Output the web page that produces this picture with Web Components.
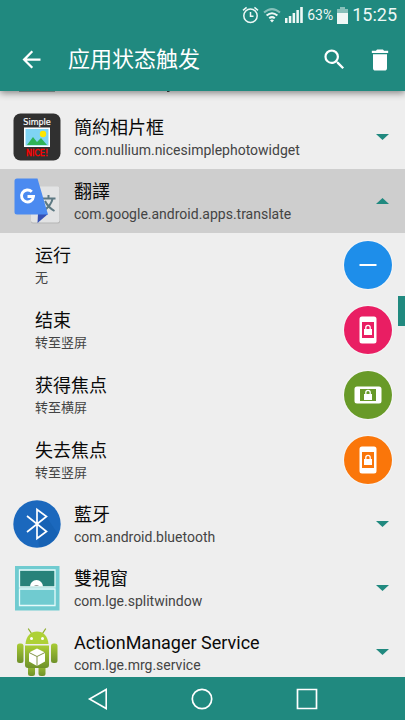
<!DOCTYPE html>
<html lang="zh-CN">
<head>
<meta charset="utf-8">
<meta name="viewport" content="width=device-width, initial-scale=1">
<title>应用状态触发</title>
<style>
  html, body { margin: 0; height: 100%; }
  body { font-family: Roboto, "Noto Sans CJK SC", sans-serif; background: #eee; color: #111; --teal: #20897f; overflow: hidden; }
</style>
</head>
<body>
<trigger-screen></trigger-screen>

<script>
const define = (name, html) => {
  const t = document.createElement('template');
  t.innerHTML = html;
  customElements.define(name, class extends HTMLElement {
    constructor() {
      super();
      this.attachShadow({ mode: 'open' }).append(t.content.cloneNode(true));
    }
    connectedCallback() {
      const label = this.getAttribute('label');
      const b = this.shadowRoot.querySelector('button');
      if (label && b) b.setAttribute('aria-label', label);
      if (b && name === 'app-row') b.setAttribute('aria-expanded', this.hasAttribute('open'));
    }
  });
};

define('status-bar', `
<style>
  :host { display: flex; height: 30px; align-items: center; justify-content: flex-end; gap: 4px; padding-right: 8px; box-sizing: border-box; color: #eef8f6; }
  svg { display: block; }
  .pct { font-size: 14px; line-height: 20px; }
  .time { font-size: 18px; line-height: 24px; }
</style>
<svg width="17" height="18" viewBox="0 0 17 18" fill="none" stroke="currentColor" stroke-width="1.5"><circle cx="8.5" cy="9.7" r="6.7"/><path d="M8.5 6v4.2h3M1 4.3 4.6 1.3M16 4.3 12.4 1.3"/></svg>
<svg width="18" height="16" viewBox="0 0 18 16" fill="none" stroke="currentColor" stroke-width="2"><path opacity=".5" d="M1 5.6Q9-1.4 17 5.6"/><path d="M3.6 8.6Q9 3.800 14.400 8.600M6.200 11.300Q9 9 11.800 11.300"/><path d="M7 13.200Q9 11.800 11 13.200L9 15.600Z" fill="currentColor" stroke="none"/></svg>
<svg width="18" height="16" viewBox="0 0 18 16" fill="currentColor"><path d="M0 11h2.500v5H0zM3.800 9h2.500v7H3.800zM7.600 6h2.500v10H7.600zM11.400 3h2.500v13h-2.500zM15.200 0h2.600v16h-2.600z"/></svg>
<span class="pct">63%</span>
<svg width="11" height="17" viewBox="0 0 11 17" fill="currentColor"><path opacity=".5" d="M3 0h5v2h3v4H0V2h3z"/><path d="M0 6h11v11H0z"/></svg>
<span class="time">15:25</span>
`);

define('icon-button', `
<style>
  :host { display: block; color: #fff; }
  button { display: grid; place-items: center; width: 46px; height: 46px; padding: 0; border: 0; background: none; color: inherit; cursor: pointer; }
</style>
<button type="button"><slot></slot></button>
`);

define('app-header', `
<style>
  :host { display: block; position: relative; z-index: 2; background: var(--teal); box-shadow: 0 2px 7px rgba(0,0,0,.45); }
  .bar { display: flex; height: 61px; align-items: center; padding: 0 2px 2px 8px; box-sizing: border-box; }
  h1 { flex: 1; margin: 0 0 0 14px; font-size: 22px; line-height: 32px; font-weight: 400; color: #fff; }
  svg { display: block; }
</style>
<status-bar></status-bar>
<div class="bar">
  <icon-button label="返回"><svg width="27" height="27" viewBox="0 0 24 24" fill="currentColor"><path d="M20 11H7.830l5.590-5.590L12 4l-8 8 8 8 1.410-1.410L7.830 13H20v-2z"/></svg></icon-button>
  <h1>应用状态触发</h1>
  <icon-button label="搜索"><svg width="27" height="27" viewBox="0 0 24 24" fill="currentColor"><path d="M15.500 14h-.790l-.280-.270A6.471 6.471 0 0 0 16 9.500 6.500 6.500 0 1 0 9.500 16c1.610 0 3.090-.590 4.230-1.570l.270.280v.790l5 4.990L20.490 19l-4.990-5zm-6 0C7.010 14 5 11.990 5 9.500S7.010 5 9.500 5 14 7.010 14 9.500 11.990 14 9.500 14z"/></svg></icon-button>
  <icon-button label="删除"><svg width="28" height="28" viewBox="0 0 24 24" fill="currentColor"><path d="M6 19c0 1.100.900 2 2 2h8c1.100 0 2-.900 2-2V7H6v12zM19 4h-3.500l-1-1h-5l-1 1H5v2h14V4z"/></svg></icon-button>
</div>
`);

define('app-row', `
<style>
  :host { display: block; }
  button { display: flex; width: 100%; height: 64px; padding: 0 16px 0 13px; border: 0; background: none; font: inherit; color: inherit; text-align: left; align-items: center; cursor: pointer; }
  :host([open]) button { background: #cecece; }
  .icon { flex: none; width: 48px; height: 48px; }
  .text { flex: 1; min-width: 0; padding: 2px 0 0 13px; display: flex; flex-direction: column; }
  .name { font-size: 18px; line-height: 24px; color: #0a0a0a; }
  .pkg { font-size: 14px; line-height: 20px; color: #444; }
  .arrow { width: 13px; height: 6px; background: var(--teal); clip-path: polygon(0 0, 100% 0, 50% 100%); }
  :host([open]) .arrow { clip-path: polygon(50% 0, 100% 100%, 0 100%); }
</style>
<button type="button">
  <span class="icon"><slot name="icon"></slot></span>
  <span class="text"><span class="name"><slot></slot></span><span class="pkg"><slot name="pkg"></slot></span></span>
  <span class="arrow"></span>
</button>
`);

define('trigger-row', `
<style>
  :host { display: flex; height: 64px; align-items: center; padding: 0 13px 0 35px; }
  .text { flex: 1; padding-top: 2px; }
  .name { font-size: 18px; line-height: 24px; color: #0a0a0a; }
  .action { font-size: 13px; line-height: 20px; color: #444; }
  button { display: grid; place-items: center; width: 48px; height: 48px; padding: 0; border: 0; border-radius: 50%; background: var(--disc); color: #fff; cursor: pointer; box-shadow: 0 0 1px 1px rgba(255,255,255,.5); }
</style>
<div class="text"><div class="name"><slot></slot></div><div class="action"><slot name="action"></slot></div></div>
<button type="button"><slot name="icon"></slot></button>
`);

define('nav-bar', `
<style>
  :host { display: grid; grid-template-columns: repeat(3, 1fr); height: 43px; padding: 0 46px; background: var(--teal); position: relative; z-index: 2; }
  button { display: grid; place-items: center; padding: 0; border: 0; background: none; color: #fff; cursor: pointer; }
  svg { display: block; }
</style>
<button type="button" aria-label="后退"><svg width="22" height="22" viewBox="0 0 22 22" fill="none" stroke="currentColor" stroke-width="1.600"><path d="M19.200 1.500v19L2.500 11z"/></svg></button>
<button type="button" aria-label="主页"><svg width="22" height="22" viewBox="0 0 22 22" fill="none" stroke="currentColor" stroke-width="1.700"><circle cx="11" cy="11" r="9.700"/></svg></button>
<button type="button" aria-label="最近"><svg width="22" height="22" viewBox="0 0 22 22" fill="none" stroke="currentColor" stroke-width="1.700"><path d="M1.500 1.500h19v19h-19z"/></svg></button>
`);

const lock = `<path d="M10 13h8v6h-8z"/><path d="M11.800 13.500v-2a2.200 2.200 0 0 1 4.400 0v2" fill="none" stroke="currentColor" stroke-width="1.300"/>`;
const phone = `<svg slot="icon" width="28" height="28" viewBox="0 0 28 28" fill="currentColor"><path fill-rule="evenodd" d="M8 .5h12a2.500 2.500 0 0 1 2.500 2.500v22a2.500 2.500 0 0 1-2.500 2.500H8A2.500 2.500 0 0 1 5.500 25V3A2.500 2.500 0 0 1 8 .5zM8 6v16h12V6z"/>${lock}</svg>`;
const phoneWide = `<svg slot="icon" width="28" height="28" viewBox="0 0 28 28" fill="currentColor"><path fill-rule="evenodd" d="M3 5.500h22A2.500 2.500 0 0 1 27.500 8v12a2.500 2.500 0 0 1-2.500 2.500H3A2.500 2.500 0 0 1 .5 20V8A2.500 2.500 0 0 1 3 5.500zM6 8v12h16V8z"/>${lock}</svg>`;

define('trigger-screen', `
<style>
  :host { display: flex; flex-direction: column; height: 100vh; }
  main { flex: 1; min-height: 0; overflow: hidden; position: relative; }
  .tail { display: block; height: 14px; }
  .triggers { display: flex; flex-direction: column; gap: 1px; }
  .thumb { position: absolute; right: 0; top: 35%; width: 7px; height: 30px; background: var(--teal); }
  svg { display: block; }
</style>
<app-header></app-header>
<main>
  <svg class="tail" width="200" height="14" viewBox="0 0 200 14" aria-hidden="true"><path d="M19 0h36v1H19z" fill="#98aaa7"/><path d="M167 0h3l-1 1h-2z" fill="#444"/></svg>

  <app-row>
    <svg slot="icon" width="48" height="48" viewBox="0 0 48 48">
      <rect x=".5" y=".5" width="47" height="47" rx="7" fill="#303030"/>
      <rect x="11" y="14.500" width="26" height="19.500" fill="#fff"/><rect x="12.500" y="16" width="23" height="16.500" fill="#7fd4f4"/>
      <path d="M14 32l6-8 4 5 4-4 6 7z" fill="#2fb457"/><circle cx="30" cy="21" r="3.200" fill="#ffe600"/>
      <text x="24" y="11.500" text-anchor="middle" font-family="DejaVu Sans" font-size="8" fill="#fff" stroke="#fff" stroke-width=".2">Simple</text>
      <text x="24" y="42.500" text-anchor="middle" font-family="DejaVu Sans" font-size="8" fill="#f00" stroke="#f00" stroke-width=".4">NICE!</text>
    </svg>簡約相片框<span slot="pkg">com.nullium.nicesimplephotowidget</span>
  </app-row>

  <app-row open>
    <svg slot="icon" width="48" height="48" viewBox="0 0 48 48">
      <rect x="18" y="10" width="29" height="36.500" rx="2" fill="#b5b5b5"/><rect x="18" y="9.500" width="28.500" height="36" rx="2" fill="#e2e3e4"/>
      <path d="M25 37h10l-10.500 9z" fill="#3450b5"/>
      <path d="M29 21.500h13.500M35.500 18v3.500M39.500 22c-1 5-5 9-9 12M32 24c2 4 5 7.500 9.500 10" fill="none" stroke="#5d7983" stroke-width="2"/>
      <path d="M4 1.500h20.500L35 37.500H4A2.500 2.500 0 0 1 1.500 35V4A2.500 2.500 0 0 1 4 1.500z" fill="#4b8af0"/>
      <path d="M18.800 14.800A6 6 0 1 0 20.500 19.500H14.500" fill="none" stroke="#fff" stroke-width="2.900"/>
    </svg>翻譯<span slot="pkg">com.google.android.apps.translate</span>
  </app-row>

  <div class="triggers">
    <trigger-row label="运行" style="--disc:#1e8eea">运行<span slot="action">无</span><svg slot="icon" width="18" height="4" viewBox="0 0 18 4"><path d="M.5 1h17v2H.5z" fill="#fff"/></svg></trigger-row>
    <trigger-row label="结束" style="--disc:#e91e63">结束<span slot="action">转至竖屏</span>${phone}</trigger-row>
    <trigger-row label="获得焦点" style="--disc:#689a28">获得焦点<span slot="action">转至横屏</span>${phoneWide}</trigger-row>
    <trigger-row label="失去焦点" style="--disc:#fa760a">失去焦点<span slot="action">转至竖屏</span>${phone}</trigger-row>
  </div>

  <app-row>
    <svg slot="icon" width="48" height="48" viewBox="0 0 48 48">
      <circle cx="24" cy="24" r="23.700" fill="#1b68bd"/><path d="M24 24 34 17.500 45 34A24 24 0 0 1 26 47z" fill="#155aa9" opacity=".45"/>
      <path d="M14 16l19.500 15.500L24 38.500V9.500l9.500 7L14 32" fill="none" stroke="#fff" stroke-width="1.700"/>
    </svg>藍牙<span slot="pkg">com.android.bluetooth</span>
  </app-row>

  <app-row>
    <svg slot="icon" width="48" height="48" viewBox="0 0 48 48">
      <path d="M2 2h44.500v44.500H2z" fill="#70cbd0"/><path d="M7 6.500h35v17H7z" fill="#28827a"/>
      <path d="M17 22.500a6.500 6.500 0 0 1 13 0z" fill="#fff"/><path d="M21 22a3 2.500 0 0 1 5 0z" fill="#999"/>
      <path d="M6.500 6h35.500v17H6.500zM6.500 25h35.500v16.500H6.500z" fill="none" stroke="#e5fafa" stroke-width="1.300"/>
    </svg>雙視窗<span slot="pkg">com.lge.splitwindow</span>
  </app-row>

  <app-row>
    <svg slot="icon" width="48" height="48" viewBox="0 0 48 48">
      <defs><linearGradient id="g" x2="0" y2="1"><stop offset="0" stop-color="#a9cc34"/><stop offset="1" stop-color="#6f912a"/></linearGradient></defs>
      <path d="M15.500 1l4 6M32.500 1l-4 6" stroke="#8fae2e" stroke-width="1.300" stroke-linecap="round"/>
      <path d="M12.500 16C13 8 18 3.500 24 3.500S35 8 35.500 16z" fill="#aed136"/>
      <circle cx="18.500" cy="10.500" r="1.500" fill="#fff"/><circle cx="29.500" cy="10.500" r="1.500" fill="#fff"/>
      <g fill="url(#g)"><rect x="4" y="15.500" width="6.500" height="19.500" rx="2.500"/><rect x="38" y="15.500" width="6.500" height="19.500" rx="2.500"/><rect x="15" y="34" width="7" height="14" rx="2.500"/><rect x="25.500" y="34" width="7" height="14" rx="2.500"/><path d="M12 17.500h24V37a3 3 0 0 1-3 3H15a3 3 0 0 1-3-3z"/></g>
      <path d="M24 20.500l8 4v9L24 38l-8-4.500v-9z" fill="#fff"/><path d="M16 24.500l8 4 8-4M24 28.500V38" fill="none" stroke="#829348" stroke-width="1"/>
    </svg>ActionManager Service<span slot="pkg">com.lge.mrg.service</span>
  </app-row>
  <div class="thumb"></div>
</main>
<nav-bar></nav-bar>
`);
</script>
</body>
</html>
